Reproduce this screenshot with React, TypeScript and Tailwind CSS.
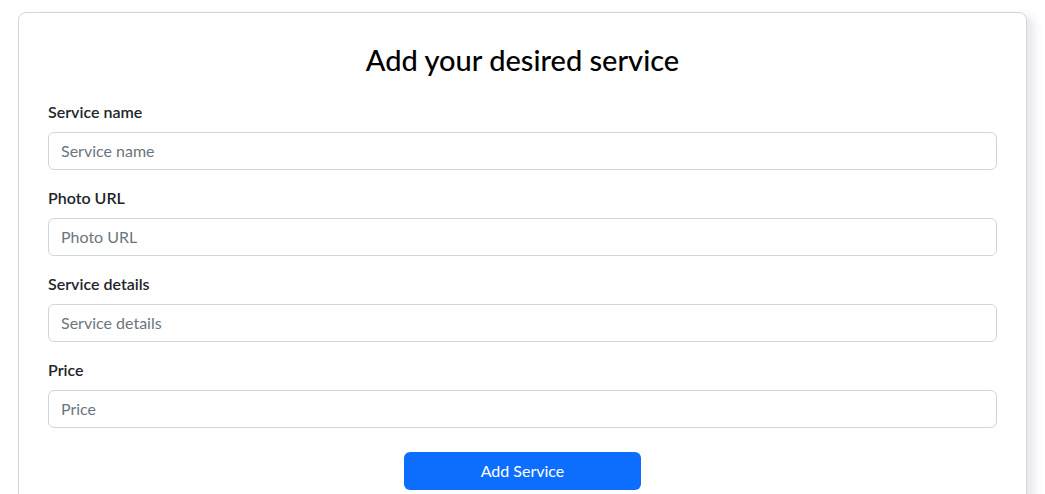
const fields = [
  { label: "Service name", name: "name" },
  { label: "Photo URL", name: "photo" },
  { label: "Service details", name: "details" },
  { label: "Price", name: "price" },
];

export default function App() {
  return (
    <div className="min-h-screen bg-white px-[18px] pt-3 font-['Lato','Noto_Sans',sans-serif] text-[#212529]">
      <div className="rounded-lg border border-[#d6d4e2] bg-white px-[29px] pt-[31px] pb-8 shadow-[7px_4px_10px_rgba(60,50,90,0.12)]">
        <h3 className="mb-6 text-center text-[29px] leading-[32px] font-medium text-black">
          Add your desired service
        </h3>
        <form>
          {fields.map((f) => (
            <div key={f.name} className="mb-4">
              <label className="mb-2 block text-base leading-6 font-semibold">{f.label}</label>
              <input
                name={f.name}
                placeholder={f.label}
                className="block h-[38px] w-full rounded-md border border-[#d2d4dc] px-3 pb-px text-base text-[#212529] placeholder:text-[#6c757d] outline-none"
              />
            </div>
          ))}
          <div className="flex justify-center pt-2">
            <button
              type="button"
              className="h-[38px] w-[237px] rounded-md bg-[#0d6efd] text-base text-white"
            >
              Add Service
            </button>
          </div>
        </form>
      </div>
    </div>
  );
}
